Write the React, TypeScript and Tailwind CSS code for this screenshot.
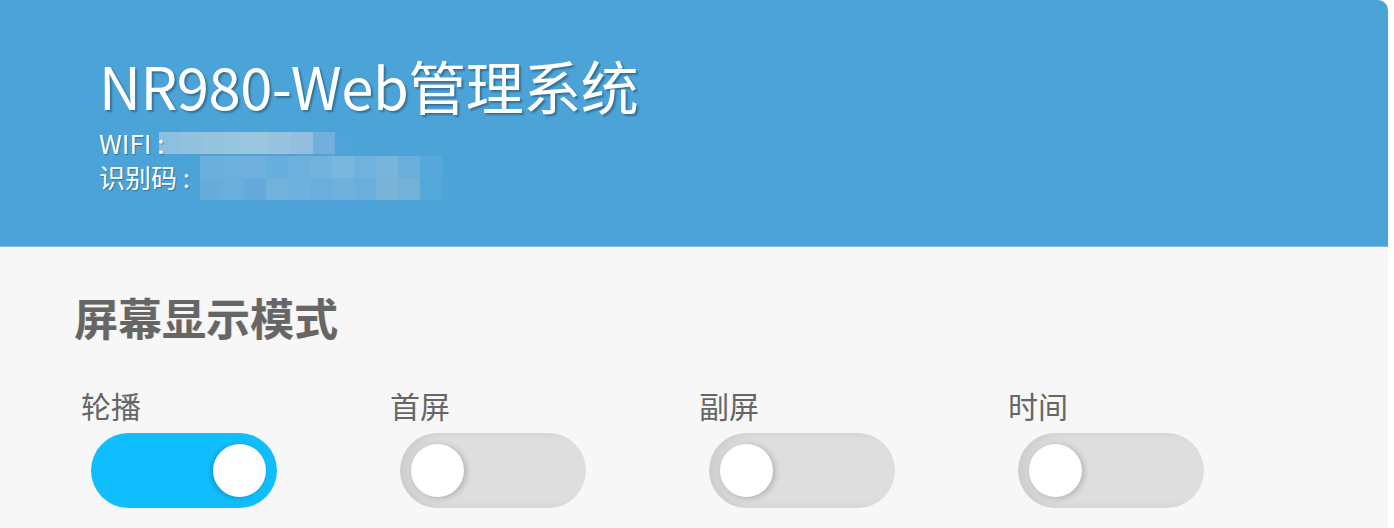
import React from "react";

const font = { fontFamily: '"Noto Sans CJK SC", "Noto Sans", sans-serif' };

const wifiBlocks = ["#8dbfe0", "#93c2df", "#96c3de", "#98c5df", "#9ac6de", "#97c3df", "#94bedf", "#71b0dc", "#4ca4d8"];
const row1 = ["#6aafdd", "#6cb0dd", "#6fb1dc", "#68aedc", "#6cb0dc", "#71b3dd", "#79b7de", "#6fb2dd", "#78b5dd", "#6aaedc", "#55a8d9"];
const row2 = ["#67acdb", "#6aaedc", "#64aadb", "#70b2dc", "#6eb1dc", "#69aedc", "#6db0dc", "#6aaedc", "#7ab3d8", "#73b1d9", "#53a7d9"];

function Mosaic({ rows }: { rows: string[][] }) {
  return (
    <div className="flex flex-col">
      {rows.map((r, i) => (
        <div key={i} className="flex">
          {r.map((c, j) => (
            <div key={j} className="w-[22px] h-[22px]" style={{ backgroundColor: c }} />
          ))}
        </div>
      ))}
    </div>
  );
}

function Toggle({ on }: { on: boolean }) {
  return on ? (
    <div className="w-[186px] h-[75px] rounded-full bg-[#10befd] flex items-center justify-end pr-[11px]">
      <div className="w-[53px] h-[53px] rounded-full bg-white shadow-[-2px_1px_5px_rgba(0,0,0,0.2)]" />
    </div>
  ) : (
    <div className="w-[186px] h-[75px] rounded-full bg-[#dedede] flex items-center pl-[11px] shadow-[inset_8px_0_10px_rgba(0,0,0,0.08)]">
      <div className="w-[53px] h-[53px] rounded-full bg-white shadow-[2px_1px_6px_rgba(0,0,0,0.22)]" />
    </div>
  );
}

const items = [
  { label: "轮播", on: true },
  { label: "首屏", on: false },
  { label: "副屏", on: false },
  { label: "时间", on: false },
];

export default function App() {
  return (
    <div className="w-[1394px] h-[528px] bg-white overflow-hidden" style={font}>
      <div className="w-[1388px] h-[528px] flex flex-col bg-[#f7f7f7] rounded-tr-[10px] overflow-hidden">
        <div className="h-[247px] bg-[#4ba3d8] pl-[99px] pt-[52px] text-white border-b border-[#7fbde3]">
          <div className="text-[58px] leading-[66px] [text-shadow:2px_2px_2px_rgba(0,0,0,0.3)] tracking-[-0.5px]">
            NR980-Web管理系统
          </div>
          <div className="mt-[8px] h-[34px] flex items-center text-[26px] leading-[34px] [text-shadow:1px_1px_1px_rgba(0,0,0,0.3)]">
            <span className="w-[60px] whitespace-nowrap relative z-10">WIFI :</span>
            <Mosaic rows={[wifiBlocks]} />
          </div>
          <div className="mt-[2px] flex items-start text-[26px] leading-[30px] [text-shadow:1px_1px_1px_rgba(0,0,0,0.3)]">
            <span className="w-[101px] whitespace-nowrap relative z-10">识别码 :</span>
            <div className="mt-[-6px]">
              <Mosaic rows={[row1, row2]} />
            </div>
          </div>
        </div>
        <div className="pl-[74px] pt-[42px]">
          <div className="text-[44px] leading-[56px] font-bold text-[#666666] [text-shadow:1px_0_0_rgba(180,120,60,0.25)]">
            屏幕显示模式
          </div>
          <div className="mt-[42px] pl-[7px] flex">
            {items.map((it) => (
              <div key={it.label} className="w-[309px] flex flex-col">
                <div className="text-[30px] leading-[36px] text-[#666666]">{it.label}</div>
                <div className="mt-[10px] ml-[10px]">
                  <Toggle on={it.on} />
                </div>
              </div>
            ))}
          </div>
        </div>
      </div>
    </div>
  );
}
